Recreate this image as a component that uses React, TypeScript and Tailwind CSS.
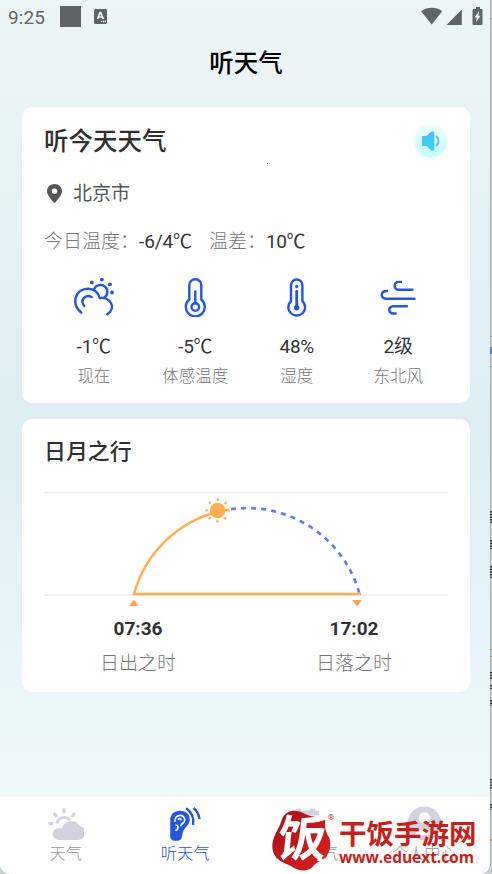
import type { FC, ReactNode } from "react";

const SunCloudIcon = () => (
  <svg width="42" height="42" viewBox="0 0 42 42" fill="none" stroke="#2456e0" strokeWidth="2.4" strokeLinecap="round">
    <path d="M8.2 37.500C-2.500 28.500 2.500 13.500 15 13.700c6.500 0 10 3.600 11.800 9.300 10.500-1.500 17 10 7.500 16.300" />
    <path d="M11.200 31c-4.500-5.500 1-12.500 7.600-9" />
    <path d="M21 14.400a6.900 6.900 0 1 1 9.800 8.500" />
    <g fill="#2456e0" stroke="none">
      <circle cx="18.900" cy="7.400" r="1.900" />
      <circle cx="28.900" cy="4.600" r="1.900" />
      <circle cx="37" cy="9.400" r="1.900" />
      <circle cx="39" cy="17.500" r="1.900" />
    </g>
  </svg>
);

const FeelsLikeIcon = () => (
  <svg width="42" height="42" viewBox="0 0 42 42" fill="none" stroke="#2456e0" strokeWidth="2.4" strokeLinecap="round">
    <path d="M15.300 24.500V10.200a6 6 0 0 1 12 0v14.300a9.500 9.500 0 1 1-12 0Z" />
    <circle cx="21.300" cy="32" r="3.800" />
    <path d="M21.300 28V16.500" />
  </svg>
);

const HumidityIcon = () => (
  <svg width="42" height="42" viewBox="0 0 42 42" fill="none" stroke="#2456e0" strokeWidth="2.4" strokeLinecap="round">
    <path d="M15 26V10.200a5.700 5.700 0 0 1 11.400 0V26a8.400 8.400 0 1 1-11.400 0Z" />
    <path d="M20.700 31.500V16.500" strokeWidth="2.800" />
    <circle cx="20.700" cy="32.700" r="2.700" fill="#2456e0" stroke="none" />
    <circle cx="20.700" cy="11.400" r="1.600" fill="#2456e0" stroke="none" />
  </svg>
);

const WindIcon = () => (
  <svg width="42" height="42" viewBox="0 0 42 42" fill="none" stroke="#2456e0" strokeWidth="2.4" strokeLinecap="round">
    <path d="M35.500 14.700H21.500c-5.300 0-5.300-7.800.5-7.800h2" />
    <path d="M37.500 23.700H9.500c-6.500 0-6.500-7.700.5-7.700" />
    <path d="M30 31.200H16c-5 0-5 7.300.5 7.300h2.200" />
  </svg>
);

const stats = [
  { icon: <SunCloudIcon />, value: "-1℃", label: "现在" },
  { icon: <FeelsLikeIcon />, value: "-5℃", label: "体感温度" },
  { icon: <HumidityIcon />, value: "48%", label: "湿度" },
  { icon: <WindIcon />, value: "2级", label: "东北风" },
];

const StatusBar: FC = () => (
  <div className="flex h-[34px] items-center pl-2 pr-[7px] text-[#606465]">
    <span className="w-[52px] text-[19px] leading-none tracking-[0.1px]">9:25</span>
    <span className="-mt-px size-[21px] bg-[#606465]" />
    <svg className="-mt-0.5 ml-[13px]" width="13" height="15" viewBox="0 0 13 15">
      <rect width="13" height="15" rx="1.500" fill="#606465" />
      <path d="M3.500 10 6.100 3.500h.6L9.300 10M4.500 8h3.800" stroke="#eef5f5" strokeWidth="1.700" fill="none" />
      <path d="M7 12.500h5" stroke="#eef5f5" strokeWidth="1.300" strokeDasharray="1.300 .6" />
    </svg>
    <svg className="-mt-0.5 ml-auto" width="62" height="20" viewBox="0 0 62 20" fill="#606465">
      <path d="M.2 5.300C6.200.700 15.500.700 21.200 5.300L10.700 18.500Z" />
      <path d="M40.800 3.500v15.500H25.500Z" />
      <path d="M52.500 3h2.500V1h4v2h1.500q1 0 1 1v14q0 1-1 1h-8q-1 0-1-1V4q0-1 1-1Z" />
      <path d="M58.200 5 53.500 11.500h2.300l-.8 4.800L59.500 9.800h-2.200Z" fill="#eef5f5" />
    </svg>
  </div>
);

const TodayCard: FC = () => (
  <section className="h-[296px] rounded-[10px] bg-white px-[22px] pt-4">
    <div className="flex h-9 items-center justify-between">
      <h2 className="pt-0.5 text-[24.500px] font-medium text-[#303030]">听今天天气</h2>
      <button
        className="flex size-[34px] items-center justify-center rounded-full bg-linear-to-b from-[#effcfc] to-[#c0fbfa] shadow-[inset_0_0_3px_#fff]"
        aria-label="播放"
      >
        <svg width="18" height="20" viewBox="0 0 18 20">
          <defs>
            <linearGradient id="speaker" x1="0" y1="0" x2="0" y2="1">
              <stop offset="0" stopColor="#5cb6f8" />
              <stop offset="1" stopColor="#25dafa" />
            </linearGradient>
          </defs>
          <path d="M1 5h3.500L9 .800Q9.500.400 10.200.400H11.500q.8 0 .8.800v17.600q0 .8-.8.800h-1.300q-.7 0-1.200-.4L4.500 15H1q-1 0-1-1V6q0-1 1-1Z" fill="url(#speaker)" />
          <path d="M14.200 5q4.600 5 0 10" stroke="#4fbdf4" strokeWidth="1.900" fill="none" />
        </svg>
      </button>
    </div>
    <div className="mt-[21px] flex h-7 items-center text-[19px] text-[#555]">
      <svg className="-mt-0.5 ml-[3px] mr-[11px]" width="15" height="19" viewBox="0 0 15 19">
        <path
          fillRule="evenodd"
          d="M7.500 0C3.200 0 0 3.200 0 7.200 0 12 7.500 19 7.500 19S15 12 15 7.200C15 3.200 11.800 0 7.500 0Zm0 4.600a2.700 2.700 0 1 1 0 5.400 2.700 2.700 0 0 1 0-5.400Z"
          fill="#555"
        />
      </svg>
      北京市
    </div>
    <div className="mt-5 flex h-7 items-center text-[19px] text-[#333]">
      <span className="w-[95px] font-light text-[#777]">今日温度：</span>
      <span className="w-[70px] tracking-[-0.1px]">-6/4℃</span>
      <span className="w-[57px] font-light text-[#777]">温差：</span>
      <span className="tracking-[-0.4px]">10℃</span>
    </div>
    <ul className="-ml-px -mr-px mt-[19px] grid grid-cols-4">
      {stats.map((stat) => (
        <li key={stat.label} className="flex flex-col items-center">
          {stat.icon}
          <span className="mt-4 h-[28px] text-[19px] leading-7 tracking-[-0.2px] text-[#333]">{stat.value}</span>
          <span className="mt-1 text-[16.500px] font-light leading-6 text-[#777]">{stat.label}</span>
        </li>
      ))}
    </ul>
  </section>
);

const SunChart: FC = () => (
  <svg className="mt-[17px] block" width="404" height="125" viewBox="44 485 404 125" fill="none">
    <path d="M44 492.500H448M44 595H448" stroke="#ebeeee" strokeWidth="1.300" />
    <path d="M231 509.200A116.600 116.600 0 0 1 359.500 594" stroke="#5f7fe8" strokeWidth="2.700" strokeDasharray="5 5.100" />
    <path d="M229 509.500A116.600 116.600 0 0 0 134 594H361" stroke="#ffad50" strokeWidth="2.500" />
    <circle cx="217.500" cy="510.500" r="7.800" fill="#ffad50" />
    <circle cx="217.500" cy="510.500" r="10.900" stroke="#ffad50" strokeWidth="2.600" strokeLinecap="round" strokeDasharray=".01 8.551" />
    <path d="M129 606 133 600.500q.8-1 1.600 0L138.500 606ZM352.300 600h9.600l-4 5.500q-.8 1-1.600 0Z" fill="#ffa550" />
  </svg>
);

const SunMoonCard: FC = () => (
  <section className="mt-4 h-[273px] rounded-[10px] bg-white px-[22px] pt-4">
    <h2 className="h-[33px] text-[21.900px] font-medium leading-[33px] text-[#303030]">日月之行</h2>
    <SunChart />
    <div className="flex justify-between px-14 pt-[5px] text-center">
      <div className="w-[76px]">
        <p className="text-[19px] font-bold leading-7 text-[#303030]">07:36</p>
        <p className="mt-[7px] text-[19px] font-light leading-7 text-[#777]">日出之时</p>
      </div>
      <div className="w-[76px]">
        <p className="text-[19px] font-bold leading-7 text-[#303030]">17:02</p>
        <p className="mt-[7px] text-[19px] font-light leading-7 text-[#777]">日落之时</p>
      </div>
    </div>
  </section>
);

const Tab: FC<{ label: string; active?: boolean; children: ReactNode }> = ({ label, active, children }) => (
  <li className={active ? "flex flex-col items-center text-[#2456e0]" : "flex flex-col items-center text-[#9697a0]"}>
    {children}
    <span className="text-[16.300px] font-light leading-6">{label}</span>
  </li>
);

const TabBar: FC = () => (
  <ul className="grid h-[77px] grid-cols-4 rounded-b-[10px] bg-white pl-[6px] pr-[6px] pt-[9px]">
    <Tab label="天气">
      <svg width="36" height="36" viewBox="0 0 36 36" fill="none" stroke="#d1d2dd" strokeWidth="3.400" strokeLinecap="round">
        <path d="M9 17.500a7.200 7.200 0 0 1 13-3" strokeWidth="2.800" strokeLinecap="butt" />
        <path d="M16 3.800v2M6.700 8l1.300 1.700M26 8l-1.300 1.700M1.800 17.500h2" />
        <path d="M10 34a6 6 0 1 1 3.500-11.200C16.500 13.500 29 13.500 31 19.500a7.300 7.300 0 0 1-1.500 14.500Z" fill="#d1d2dd" stroke="none" />
      </svg>
    </Tab>
    <Tab label="听天气" active>
      <svg width="36" height="36" viewBox="0 0 36 36" fill="none">
        <path d="M3.200 14.500C3.200 8.500 7 4.800 13 4.800c6.500 0 10.300 4.200 9.700 9.700-.7 5.500-5.500 6.500-7 12.500-.8 3.500-.7 7.700-5.200 7.700H8c-3 0-4.800-1.700-4.800-4.700Z" fill="#2456e0" />
        <path d="M8 16c-1.500-8.500 10.500-8.500 9.700-1.500-.4 3.300-4.200 2.800-4.200 6" stroke="#fff" strokeWidth="1.600" />
        <path d="M11 14c.8-2 3-1.700 3.200.3M8.500 19c3.300 0 3.300 5-.2 5.300" stroke="#fff" strokeWidth="1.600" />
        <path d="M19 2.200c5.500 3.500 8.500 10 7 16.800M26.500 2c3.500 2.800 5.500 6.500 6 11.200" stroke="#2456e0" strokeWidth="2.400" />
      </svg>
    </Tab>
    <Tab label="15日天气">
      <svg width="36" height="36" viewBox="0 0 36 36" fill="#d1d2dd">
        <path d="M9 2.500h5v2h9v-2h5v2h4v5H6v-5h3ZM9 11h22v23H9Z" />
        <path d="M12 16h16M12 22h16M12 28h16" stroke="#fff" strokeWidth="2" />
      </svg>
    </Tab>
    <Tab label="个人中心">
      <svg width="36" height="36" viewBox="0 0 36 36" fill="#d1d2dd">
        <circle cx="18.500" cy="17.500" r="17" />
        <circle cx="18.500" cy="12" r="5.800" fill="#fff" />
        <path d="M8.500 29q10-13 20 0Z" fill="#fff" />
      </svg>
    </Tab>
  </ul>
);

const SiteMark: FC = () => (
  <div className="absolute bottom-0 left-[271px] flex h-[68px] w-[210px] text-[#c81f1c]">
    <div className="relative h-full w-[66px] shrink-0">
      <svg width="66" height="68" viewBox="0 0 66 68">
        <defs>
          <linearGradient id="seal" x1="0" y1="0" x2="1" y2="1">
            <stop offset="0" stopColor="#ab1217" />
            <stop offset=".6" stopColor="#c8191b" />
            <stop offset="1" stopColor="#dc2520" />
          </linearGradient>
        </defs>
        <path d="M11 13C15 4 24 3 32 7c9 4.500 14 4 23 4.500-2 8-1 13 3 20 3 7 .5 14-3 20-5 3-9 4-14 10-6 5-14 3.500-22-2C9 55.500 3 52 1.500 43 0 31 8 24 11 13Z" fill="url(#seal)" />
        <path d="M31 13.500c8 1.500 14-.5 24-3.500l-1.500 3.500c-7 3-15 3.500-23 3Z" fill="#fff" />
        <path d="M48 51q8 5 15 4-7 2.500-17-.5Z" fill="#fff" />
      </svg>
      <span className="absolute left-[7px] top-[11px] -skew-x-6 text-[49px] font-bold leading-[46px] text-white">饭</span>
      <span className="absolute left-[57px] top-[8px] text-[8px] leading-none">®</span>
    </div>
    <div className="ml-[2px] pt-[13px]">
      <p className="whitespace-nowrap text-[27.500px] font-bold leading-[32px]">干饭手游网</p>
      <p className="-mt-[4px] whitespace-nowrap font-['Open_Sans',sans-serif] text-[15.600px] font-bold leading-5 tracking-[-0.1px]">
        www.eduext.com
      </p>
    </div>
  </div>
);

// slivers of the window that sits behind the right edge
const EdgeMarks: FC = () => (
  <svg className="absolute right-0 top-0" width="2" height="874" viewBox="0 0 2 874" stroke="#333b40" strokeWidth="2">
    <path d="M1 511v12M1 540v9M1 566v12M1 672v8M1 685v4M1 700v6M1 779v10M1 804v6" strokeDasharray="1.500 1.200" />
    <path d="M1 336v1M1 366v1M1 18v1" stroke="#999" />
    <path d="M1 347v7" stroke="#5377cc" />
    <path d="M1 649v1M1 656v1M1 839v2" stroke="#ac8a61" />
  </svg>
);

export default function App() {
  return (
    <div className="relative h-[874px] w-[492px] overflow-hidden bg-[#ccd0d1] pr-[1px] font-[Roboto,'Noto_Sans_CJK_SC',sans-serif]">
      <div className="flex h-full flex-col overflow-hidden rounded-b-[10px] border-r border-[#a9afb1] bg-linear-to-b from-[#edf5f6] via-[#dceef2] to-[#f4fbfd]">
        <StatusBar />
        <h1 className="h-[73px] pl-0.5 pt-2.5 text-center text-[24.500px] font-medium leading-[40px] text-black">听天气</h1>
        <main className="flex-1 pl-[22px] pr-5">
          <TodayCard />
          <SunMoonCard />
        </main>
        <TabBar />
      </div>
      <span className="absolute left-[267px] top-[163px] size-px bg-[#777]" />
      <EdgeMarks />
      <SiteMark />
    </div>
  );
}
